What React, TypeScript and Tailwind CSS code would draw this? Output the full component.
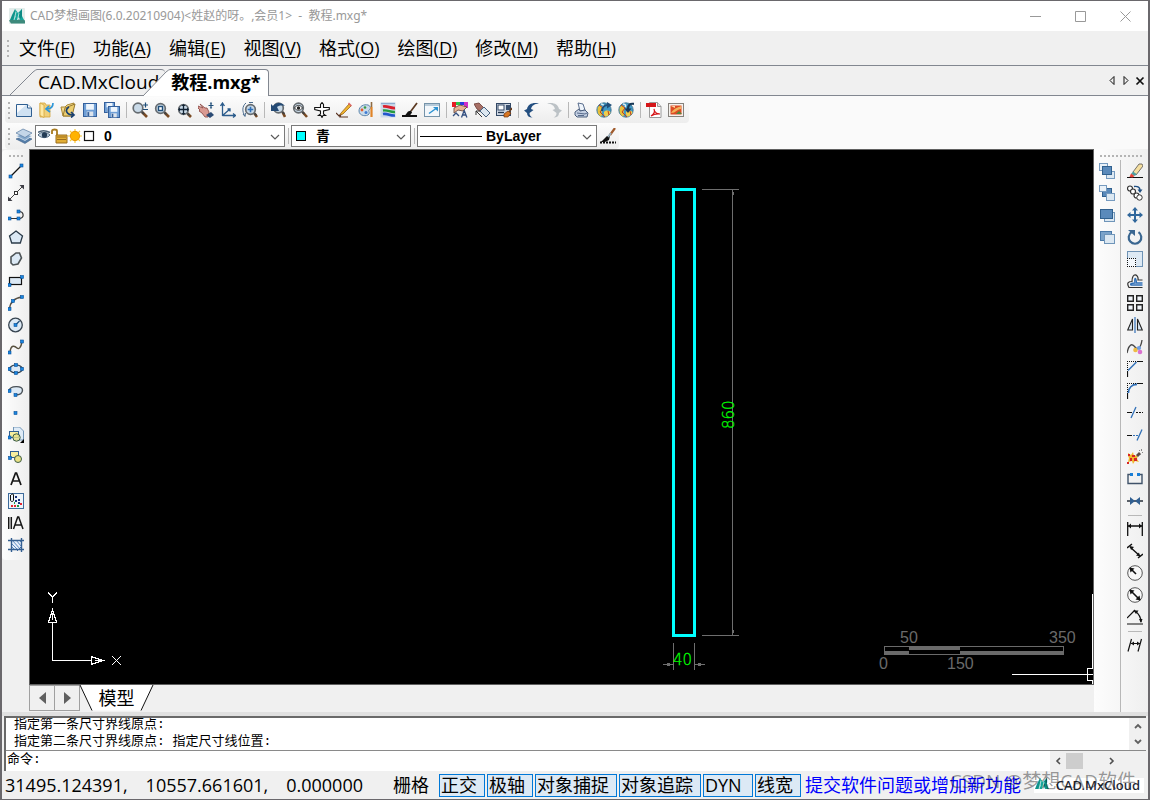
import React from "react";

const NAVY = "#1f4e79";
const BLUE = "#2f6fb7";

const Lens = ({ x = 6, y = 6 }: { x?: number; y?: number }) => (
  <>
    <path d={`M${x + 4} ${y + 4}L15 15`} stroke="#7a4a22" strokeWidth="2.6" />
    <path d={`M${x + 3.5} ${y + 3.5}l2.500 2.500`} stroke="#444" strokeWidth="1.8" />
    <circle cx={x} cy={y} r="4.8" fill="#c9dae8" stroke="#666c71" strokeWidth="1.7" />
  </>
);

const Dot = ({ x, y }: { x: number; y: number }) => (
  <rect x={x - 1.5} y={y - 1.5} width="3" height="3" fill="#1a86e0" stroke="#0b4f96" strokeWidth=".6" />
);

const Globe = () => (
  <>
    <circle cx="8" cy="8" r="7.2" fill="#3f97c4" stroke="#3a6d88" strokeWidth=".8" />
    <path d="M2 5c3-3 5 0 4 3s1 5-1 6.500C2 13 .8 9 2 5z" fill="#e8c13a" />
    <path d="M9 9c3-1 5 0 5.500 1.500C13 13 11 15 9 14.500c-1-2-2-4 0-5.500z" fill="#f0cf4b" />
    <path d="M3 3l4 3-3 4 5 5M12 9l1 4" stroke="#c4401c" fill="none" />
    <path d="M5 2c3 0 3 2 2 3" stroke="#d8f0f6" strokeWidth="1.500" fill="none" />
  </>
);

const Palette = () => (
  <path d="M1 9C1 4 6 2 10 3c3 1 3 4 1 5-1 1 1 2 0 4-2 3-10 2-10-3z" fill="#c9dbea" stroke="#5e87ad" />
);

const Floppy = ({ x, y, s }: { x: number; y: number; s: number }) => (
  <>
    <rect x={x} y={y} width={s} height={s} fill="#6f9fd6" stroke="#34609c" />
    <rect x={x + s * 0.2} y={y + 0.5} width={s * 0.6} height={s * 0.44} fill="#eef5fc" />
    <rect x={x + s * 0.25} y={y + s * 0.62} width={s * 0.5} height={s * 0.36} fill="#dde4ec" />
    <rect x={x + s * 0.3} y={y + s * 0.66} width={s * 0.14} height={s * 0.32} fill="#34609c" />
  </>
);

const PaperFill = "#dce9f5";

const icons: Record<string, React.ReactNode> = {
  新建: (
    <>
      <path d="M.5 2.500h11l4 3.500v8.500H.5z" fill="#cfe1f2" stroke="#2f5f92" />
      <path d="M1 3h9L1 11z" fill="#fff" opacity=".8" />
      <path d="M11.500 2.500v3.500h4" fill="#fff" stroke="#2f5f92" />
    </>
  ),
  打开: (
    <>
      <path d="M2 1h5l1 2h4v12H2z" fill="#f1d07a" stroke="#d6a63c" strokeWidth=".8" />
      <path d="M2 1l4 2v12.500l-4-2z" fill="#ffe9a4" stroke="#d6a63c" strokeWidth=".8" />
      <path d="M15 1c0 4-2 6-6 6M11 4L8 7l4 3" fill="none" stroke="#2f96d8" strokeWidth="1.700" />
    </>
  ),
  打开云图: (
    <>
      <path d="M1 5h4l2-2 7-2-1 4-3 9H3z" fill="#f3d98b" stroke="#a98631" />
      <path d="M5 6l10-4-3 12H3z" fill="#edcf70" stroke="#94762b" />
      <path d="M9 5c-5 3-2 8 4 8M11 10l3 3-3 2.500" fill="none" stroke="#173f70" strokeWidth="1.700" />
    </>
  ),
  保存: <Floppy x={1.5} y={1.5} s={13} />,
  另存为: (
    <>
      <Floppy x={0.5} y={0.5} s={10} />
      <Floppy x={4.5} y={4.5} s={11} />
    </>
  ),
  实时缩放: (
    <>
      <Lens />
      <path d="M11 3h5M13.500.5v5M11 7.500h5" stroke={NAVY} strokeWidth="1.200" />
    </>
  ),
  窗口缩放: (
    <>
      <Lens x={6.5} y={6.5} />
      <rect x="4.500" y="4.500" width="4" height="4" fill="#fff" stroke={NAVY} strokeWidth="1.400" />
    </>
  ),
  范围缩放: (
    <>
      <Lens x={7.500} y={7.500} />
      <path d="M3 7.500h9M7.500 3v9" stroke="#123" strokeWidth="1.300" />
      <path d="M2 7.500l2-2v4zM13 7.500l-2-2v4zM7.500 2l-2 2h4zM7.500 13l-2-2h4z" fill="#123" />
    </>
  ),
  平移: (
    <>
      <path d="M0 4l5 2-3-4 5 4 2 0 2 4-1 5H7L4 11 1 9l1-1-2-2z" fill="#d99a92" stroke="#8f4f4b" strokeWidth=".9" />
      <path d="M8 13l5-3 3 3-4 3z" fill="#2b4a74" />
      <path d="M10.500 3.500h5M13 1v5" stroke={NAVY} strokeWidth="1.200" />
      <path d="M13 0l-1.300 1.500h2.600zM13 7l-1.300-1.500h2.600z" fill={NAVY} />
    </>
  ),
  坐标系: (
    <path d="M2.500 14V2M2.500 13.500H15M2.500 13.500L10 7M.5 4l2-3 2 3M13 11.500l2.500 2-2.500 2M7.500 7H10v2.500" fill="none" stroke="#2c5c8c" strokeWidth="1.300" />
  ),
  动态缩放: (
    <>
      <Lens x={8.500} y={7.500} />
      <path d="M8.500 4.700v5.600M5.700 7.500h5.600" stroke={BLUE} strokeWidth="1.600" />
      <path d="M4 1C0 4 0 10 3 14M1 12l2 2.500.5-3.500M7 .5h4" fill="none" stroke="#4b6c8e" />
    </>
  ),
  上一视图: (
    <>
      <Lens x={8.5} y={6} />
      <path d="M1 9V2l2 2c3-4 9-4 12 0-4-1-7 0-8 1l2 4z" fill="#244a75" />
    </>
  ),
  显示全部: (
    <>
      <Lens x={6.5} y={6} />
      <path d="M2.500 6c2-3.500 6-3.500 8 0-2 3-6 3-8 0z" fill="#fff" stroke="#333" />
      <circle cx="6.500" cy="6" r="1.700" fill="#222" />
    </>
  ),
  飞行: (
    <path d="M8 .5L6.500 2.500v3H.7v2l5.800 1.500v3l-2 1.500h2.500L8 15.500l1-2h2.500l-2-1.500V9l5.800-1.500v-2H9.500v-3z" fill="#fff" stroke="#111" strokeWidth="1.100" />
  ),
  编辑: (
    <>
      <path d="M0 11l3 3 2-2-1 3h8" fill="none" stroke="#5a3320" strokeWidth="1.200" />
      <path d="M5 11l8-9 2 2-8 8-3 1z" fill="#efb52d" stroke="#9b641f" strokeWidth=".8" />
      <path d="M12.500 1l3 3" stroke="#d66" strokeWidth="1.500" />
    </>
  ),
  颜色: (
    <>
      <Palette />
      <circle cx="4" cy="8" r="1.400" fill="#e45c2b" />
      <circle cx="7" cy="5.500" r="1.300" fill="#3a9b45" />
      <circle cx="8" cy="10.500" r="1.500" fill="#3f7bd3" />
      <path d="M13.500 5v10" stroke="#e08428" strokeWidth="2.200" />
      <path d="M13.500 0v5" stroke="#8e6b44" strokeWidth="1.600" />
    </>
  ),
  图层颜色: (
    <>
      <rect x=".5" y=".5" width="15" height="15" fill="#cddbea" />
      <path d="M3 4.500c5-1 7 2 12 1.500" stroke="#d9202e" strokeWidth="2.800" fill="none" />
      <path d="M3 8.500c5-1 7 2 12 1.500" stroke="#239b40" strokeWidth="2.400" fill="none" />
      <path d="M3 12c5-1 7 2 12 1.500" stroke="#2256cc" strokeWidth="2.600" fill="none" />
      <path d="M1 1.500h14" stroke="#8eabcf" strokeWidth="1.300" fill="none" />
    </>
  ),
  线宽设置: (
    <>
      <path d="M0 14h15" stroke="#111" strokeWidth="2" />
      <path d="M3 13.500l3-4 3-1 1 2-2 3z" fill="#111" />
      <path d="M9 9l6-8" stroke="#5b3921" strokeWidth="1.700" />
    </>
  ),
  窗口: (
    <>
      <rect x=".5" y="1.500" width="15" height="13" fill="#f3f7fb" stroke="#7593a9" />
      <path d="M1 3h14" stroke="#b6cad9" strokeWidth="2" />
      <path d="M5 11.500l7-5" stroke="#2d92d1" strokeWidth="1.500" />
      <path d="M9 5h5v4.500z" fill="#2d92d1" />
    </>
  ),
  文字样式: (
    <>
      <path d="M0 0h4v5H0z" fill="#e71c24" />
      <path d="M4 0h4v3H4z" fill="#2cc24b" />
      <path d="M8 0h4v3H8z" fill="#283be0" />
      <path d="M12 0h4v6h-4z" fill="#d12ec7" />
      <path d="M2 6l6-3 7 2-4 4-5-1-4 3z" fill="#eab393" stroke="#6c4e42" strokeWidth=".9" />
      <path d="M1 14l3-3 3 3M9.500 15.500l2.700-7 2.700 7M10.500 13h3.500" fill="none" stroke="#334f80" strokeWidth="1.300" />
    </>
  ),
  特性匹配: (
    <>
      <path d="M0 2l5-1 5 5-3 4-4-3z" fill="#a87066" stroke="#6b3933" strokeWidth=".8" />
      <path d="M6 9l4-4 6 6-4 4z" fill="#dce7f0" stroke="#47627f" />
      <path d="M2 13V9h4M2 9l6 6" fill="none" stroke="#333" />
    </>
  ),
  特性: (
    <>
      <rect x=".5" y="1.500" width="14" height="12" fill="#cfd8e4" stroke="#344966" />
      <rect x="2" y="3" width="6" height="5" fill="#fff" stroke="#344966" />
      <path d="M10 3h4v5h-4z" fill="#39506f" />
      <path d="M2 10.500h6" stroke="#26384f" strokeWidth="1.300" />
      <path d="M8 12l4-3 3 2-3 4-4 0z" fill="#d87622" stroke="#6e3410" strokeWidth=".7" />
      <path d="M13 10l3-4" stroke="#6a3e1d" strokeWidth="1.500" />
    </>
  ),
  撤销: (
    <path d="M0 8.500L3 7C4 2 9 0 15 1.500c-5 .5-7 2-8 5.500l2.500 1L5.500 11c0 2 1 3.500 3 4.500C5 15.500 3 14 3 11z" fill="#244f80" />
  ),
  重做: (
    <path d="M16 8.500L13 7C12 2 7 0 1 1.500c5 .5 7 2 8 5.500l-2.500 1 4 3c0 2-1 3.500-3 4.500 3.500 0 5.500-1.500 5.500-4.500z" fill="#bcc2c6" />
  ),
  打印: (
    <>
      <path d="M4 1l5 1 2 6-5 1z" fill="#eef4fb" stroke="#4b6082" strokeWidth=".9" />
      <path d="M1 10l4-3 1 2 5-1 3 3-1 4H3l-2-2z" fill="#c3cfe2" stroke="#4b5e7d" />
      <path d="M3 11l8 1 2-1M4 13.500h6" fill="none" stroke="#56698a" />
    </>
  ),
  网络: (
    <>
      <Globe />
      <path d="M6 9c0-4 3-6 6-6" stroke={NAVY} strokeWidth="2.200" fill="none" />
      <path d="M11 0l5 3-5 3.500z" fill={NAVY} />
    </>
  ),
  发布: (
    <>
      <Globe />
      <path d="M16 2c-4-1-6 1-6 5" stroke="#173755" strokeWidth="2.200" fill="none" />
      <path d="M6.500 6.500h7L10 11z" fill="#173755" />
    </>
  ),
  "输出 PDF": (
    <>
      <path d="M3.500.5h8l3.500 4v11H3.500z" fill="#fff" stroke="#9a9a9a" />
      <path d="M11.500.5v4H15" fill="#e1e1e1" stroke="#9a9a9a" />
      <rect x="0" y="1" width="10" height="4" fill="#d51619" />
      <path d="M5 14c3-2 4-5 3-7 0 3 3 5 6 5-4-.5-6 0-9 2z" fill="none" stroke="#d51619" strokeWidth="1.200" />
    </>
  ),
  输出图片: (
    <>
      <rect x=".5" y="1.500" width="15" height="13" fill="#f4f1ec" stroke="#85817c" />
      <rect x="2.500" y="3.500" width="11" height="9" fill="#dd4b23" />
      <path d="M3 11c4-6 7-5 10-7v3c-4 0-5 4-10 4z" fill="#f2b25a" />
      <path d="M8 12l3-3 3 3z" fill="#4e883e" />
      <path d="M3 4h4v2z" fill="#f9d5a5" />
    </>
  ),
  图层: (
    <>
      <path d="M0 11l8-3 8 3-7 4.500z" fill="#547da8" stroke="#3d6086" strokeWidth=".6" />
      <path d="M0 8l8-3 8 3-7 4.500z" fill="#85a8cb" stroke="#e9f1f8" strokeWidth=".7" />
      <path d="M0 5l7-4 9 4-7 4.500z" fill="#c4d6e8" stroke="#56799f" strokeWidth=".7" />
    </>
  ),
  线宽画笔: (
    <>
      <path d="M0 14.500h16" stroke="#111" strokeWidth="1.800" strokeDasharray="2 1" />
      <path d="M1 14l6-6 3 0-1 4-4 2z" fill="#111" />
      <path d="M10 7l5-7" stroke="#a05a2b" strokeWidth="2.200" />
      <path d="M8 9l3-4" stroke="#97abb8" strokeWidth="2" />
    </>
  ),

  直线: (
    <>
      <path d="M3 13L13 3" stroke="#111" strokeWidth="1.300" />
      <Dot x={2.500} y={13.500} />
      <Dot x={13.500} y={2.500} />
    </>
  ),
  构造线: (
    <>
      <path d="M2 14L14 2" stroke="#454545" />
      <path d="M0 16v-4.500l4.500 4.500zM16 0v4.500L11.500 0z" fill="#3d3d45" />
      <rect x="6.500" y="6.500" width="3" height="3" fill="#fff" stroke="#333" />
    </>
  ),
  多段线: (
    <>
      <path d="M1 11.500h9M11 4.500c5 0 6 7 0 7" fill="none" stroke="#333" strokeWidth="1.200" />
      <Dot x={1.500} y={11.500} />
      <Dot x={10.5} y={11.500} />
      <Dot x={10.5} y={4.500} />
    </>
  ),
  正多边形: <path d="M8 2l6.500 5-2.200 7H3.700L1.500 7z" fill={PaperFill} stroke="#2b3b49" strokeWidth="1.300" />,
  多边形: <path d="M8 2h3.500l2 5-3.500 6-5 1L3 12V6z" fill={PaperFill} stroke="#4d5356" strokeWidth="1.600" />,
  矩形: (
    <>
      <rect x="1.500" y="4.500" width="12" height="7" fill={PaperFill} stroke="#111" strokeWidth="1.200" />
      <Dot x={1.500} y={12} />
      <Dot x={14} y={4} />
    </>
  ),
  圆弧: (
    <>
      <path d="M1.500 14C2 7 7 3 14 2" fill="none" stroke="#554f45" strokeWidth="1.300" />
      <Dot x={1.500} y={14} />
      <Dot x={5} y={6} />
      <Dot x={14} y={2} />
    </>
  ),
  圆: (
    <>
      <circle cx="7.500" cy="8" r="6.800" fill={PaperFill} stroke="#374450" strokeWidth="1.300" />
      <path d="M7.500 8l4-4" stroke={NAVY} strokeWidth="1.200" />
      <Dot x={7.500} y={8} />
    </>
  ),
  样条曲线: (
    <>
      <path d="M2 13c1-8 5-6 7-4s4-1 5-6" fill="none" stroke="#57503f" strokeWidth="1.400" />
      <Dot x={1.500} y={13.500} />
      <Dot x={14} y={2.500} />
    </>
  ),
  椭圆: (
    <>
      <ellipse cx="8" cy="8" rx="6.500" ry="4" fill={PaperFill} stroke="#2d3b48" strokeWidth="1.200" />
      <Dot x={1.500} y={8} />
      <Dot x={14} y={8} />
      <Dot x={8} y={4} />
      <Dot x={8} y={12} />
    </>
  ),
  椭圆弧: (
    <>
      <path d="M1.500 7C2 3 14 2 14.500 7c0 4-4 5-7 5" fill={PaperFill} stroke="#4a5157" strokeWidth="1.400" />
      <Dot x={1.500} y={8} />
      <Dot x={7.500} y={12} />
    </>
  ),
  点: <Dot x={7.500} y={8} />,
  插入块: (
    <>
      <path d="M5.500 0h6l4 4v9H5.500z" fill="#deebf7" stroke="#7296b7" />
      <rect x="1.500" y="4.500" width="9" height="6" fill="#f6ee9e" stroke="#315f91" />
      <circle cx="8.500" cy="10.500" r="3.700" fill="#e9e184" stroke="#3e5e48" fillOpacity=".8" />
      <Dot x={1.500} y={10.500} />
      <path d="M16 12v4h-4z" fill="#000" />
    </>
  ),
  创建块: (
    <>
      <rect x="2.500" y="2.500" width="8" height="6" fill="#f6ee9e" stroke="#315f91" />
      <circle cx="10" cy="10" r="3.500" fill="#e9e184" stroke="#3e5e48" />
      <Dot x={2} y={9} />
    </>
  ),
  单行文字: <path d="M3 14L7.500 2h1L13 14M4.500 10h7" fill="none" stroke="#161616" strokeWidth="1.700" />,
  图块库: (
    <>
      <rect x=".5" y=".5" width="15" height="15" fill="#edf4fb" stroke="#3d6b9c" />
      <path d="M2.500 2v5c0 2 3 2 3 0V2c0-1.500-2-1.500-2 0" fill="none" stroke="#111" />
      <path d="M7 3h2v2H7zM7 7h2v2H7zM10 6h2v2h-2zM10 9h2v2h-2z" fill="#18317c" />
      <path d="M12 10h2v2h-2zM3 12h2v2H3zM6 12h2v2H6z" fill="#e32731" />
      <path d="M9 12h2v2H9zM6 9h1v2H6z" fill="#239942" />
    </>
  ),
  多行文字: <path d="M.7 2v12M3.300 2v12M5.500 14l4.200-12h1L15 14M7 10h6.500" fill="none" stroke="#161616" strokeWidth="1.500" />,
  图案填充: (
    <>
      <path d="M4 3h9v10H4z" fill="#e6effa" />
      <path d="M4 3l9 10M4 7l6 6M8 3l5 6M4 10l3 3M11 3l2 2" stroke="#5d8ac2" />
      <path d="M3.500 1v14M13.500 1v14M0 3.500h16M0 12.500h16" stroke="#345f91" strokeWidth="1.400" />
      <path d="M9 14l5-5" stroke="#3c67a0" />
    </>
  ),

  前置: (
    <>
      <rect x=".5" y=".5" width="8" height="7" fill="#e9f1f8" stroke="#759abf" />
      <rect x="7.500" y="8.500" width="8" height="7" fill="#dce8f2" stroke="#759abf" />
      <rect x="3.500" y="3.500" width="9" height="8" fill="#5a8abb" stroke="#31618f" />
    </>
  ),
  后置: (
    <>
      <rect x="3.500" y="3.500" width="9" height="8" fill="#5a8abb" stroke="#31618f" />
      <rect x=".5" y=".5" width="7" height="6" fill="#e9f1f8" stroke="#759abf" />
      <rect x="7.500" y="8.500" width="8" height="7" fill="#dce8f2" stroke="#759abf" />
    </>
  ),
  置于对象之上: (
    <>
      <rect x="5.500" y="5.500" width="10" height="9" fill="#dce8f2" stroke="#6f95b9" />
      <rect x="1.500" y="2.500" width="12" height="9" fill="#5a8abb" stroke="#31618f" />
    </>
  ),
  置于对象之下: (
    <>
      <rect x="1.500" y="2.500" width="11" height="9" fill="#7ba3ca" stroke="#4a79a8" />
      <rect x="5.500" y="5.500" width="10" height="9" fill="#dce8f2" stroke="#6f95b9" />
    </>
  ),
  删除: (
    <>
      <path d="M0 14.500h16" stroke="#111" />
      <path d="M6 9l6-8 3 0 1 2-7 9z" fill="#f5dfa0" stroke="#55524b" strokeWidth=".8" />
      <path d="M6 8.500l3.500 2.500-1.500 2-4-2z" fill="#4d9f9f" />
      <path d="M4 10.500l3.500 2.500-2 1.500L2.500 14z" fill="#e84335" />
    </>
  ),
  复制: (
    <>
      <circle cx="3" cy="3.500" r="2.500" fill="#fff" stroke="#333" strokeWidth="1.200" />
      <circle cx="6" cy="6.500" r="2.500" fill="#fff" stroke="#333" strokeWidth="1.200" />
      <circle cx="9.500" cy="10.500" r="2.500" fill="#fff" stroke="#333" strokeWidth="1.200" />
      <circle cx="12.500" cy="12.500" r="2.700" fill="#fff" stroke="#333" />
      <path d="M7 1.500c4-.5 6 1 6 4" fill="none" stroke="#1d4d80" strokeWidth="1.400" />
      <path d="M10.500 4.500h5L13 8z" fill="#1d4d80" />
    </>
  ),
  移动: (
    <path d="M8 0l3 3.500H9V7h3.500V5L16 8l-3.500 3V9H9v3.500h2L8 16l-3-3.500h2V9H3.500v2L0 8l3.500-3v2H7V3.500H5z" fill="#2f669b" />
  ),
  旋转: (
    <>
      <path d="M4.500 3.200a6.300 6.300 0 1 0 7 0" fill="none" stroke="#3a6690" strokeWidth="2.200" />
      <path d="M1 1h7v6z" fill="#3a6690" />
    </>
  ),
  缩放: (
    <g shapeRendering="crispEdges">
      <path d="M.5 7V.5h15v15H9" fill="#dde9f4" stroke="#6f93b5" />
      <rect x="0" y="7" width="9" height="9" fill="#f4f8fc" />
      <path d="M0 7.500h9M.5 7v9M8.500 7v9M0 15.500h9" stroke="#111" strokeDasharray="1 1" />
    </g>
  ),
  偏移: (
    <>
      <path d="M15.500 14.500H2c-3-5 0-6 3-6 0-10 7-7 6-1.500h4.500" fill="none" stroke="#333" strokeWidth="1.200" />
      <path d="M15.500 12H4c-1-1 0-2 4-2-1-6 1-6 1.500 0h6" fill="none" stroke={BLUE} strokeWidth="1.300" />
    </>
  ),
  阵列: (
    <path d="M.7.7h5.600v5.600H.7zM9.700.7h5.600v5.600H9.700zM.7 9.700h5.600v5.600H.7zM9.700 9.700h5.600v5.600H9.700z" fill="#f1f5fa" stroke="#222" strokeWidth="1.400" />
  ),
  镜像: (
    <>
      <path d="M5.500 2v11H.7z" fill="#dbe7f2" stroke="#222" strokeWidth="1.100" />
      <path d="M10.500 2v11h4.800z" fill="#dbe7f2" stroke="#222" strokeWidth="1.100" />
      <path d="M8 0v16" stroke={BLUE} strokeWidth="1.200" />
    </>
  ),
  编辑样条: (
    <>
      <path d="M0 14C2 5 5 4 8 8s6 0 7-7" fill="none" stroke="#454545" strokeWidth="1.300" />
      <circle cx="8.500" cy="11" r="2.300" fill="#efba43" />
      <circle cx="12" cy="9" r="2.100" fill="#6c9de2" />
      <circle cx="13" cy="13" r="2.300" fill="#da72cf" />
    </>
  ),
  倒角: (
    <>
      <path d="M.5 16v-6M10 .5h6" fill="none" stroke="#111" strokeWidth="1.200" />
      <path d="M1 9.500L9.500 1" stroke={BLUE} strokeWidth="1.500" />
      <path d="M.5 9V.5H9" fill="none" stroke="#111" strokeDasharray="1 1" shapeRendering="crispEdges" />
    </>
  ),
  圆角: (
    <>
      <path d="M.5 16v-6M10 .5h6" fill="none" stroke="#111" strokeWidth="1.200" />
      <path d="M1.300 10C1.500 5 5 1.500 10 1.300" fill="none" stroke={BLUE} strokeWidth="1.900" />
      <path d="M.5 9V.5H9" fill="none" stroke="#111" strokeDasharray="1 1" shapeRendering="crispEdges" />
    </>
  ),
  修剪: (
    <>
      <path d="M0 7.500h5" stroke="#111" />
      <path d="M9 7.500h7" stroke="#111" strokeDasharray="2 1" />
      <path d="M4 13l5-11" stroke={BLUE} strokeWidth="1.300" />
    </>
  ),
  延伸: (
    <>
      <path d="M0 8.500h5" stroke="#111" />
      <path d="M6 8.500h5" stroke={BLUE} strokeDasharray="2 1" />
      <path d="M10 13.500l5-11" stroke={BLUE} strokeWidth="1.300" />
    </>
  ),
  分解: (
    <>
      <path d="M1 4l3 2 2-3 1 4 4-1-1 4 2 3-4-1-2 3-1-3-4 1 1-4-1-2z" fill="#f0b62d" />
      <path d="M1 5h2v2H1zM5 6h3v2H5zM3 9h2v3H3zM7 9h3v3H7zM0 13h2v2H0z" fill="#d72522" />
      <path d="M9 6l3-3 2 2-3 3z" fill="#5b4b48" />
      <path d="M12 1h1v1h-1zM14 0h1v2h-1zM15 3h1v1h-1zM13 5h1v1h-1z" fill="#888" />
    </>
  ),
  打断: (
    <>
      <path d="M4 3.500H1v9h14v-9h-3" fill="none" stroke="#40536a" strokeWidth="1.400" />
      <path d="M3 2h3v3H3zM10 2h3v3h-3z" fill="#1a7fd6" />
    </>
  ),
  合并: (
    <>
      <path d="M0 8h16" stroke="#17202b" strokeWidth="1.400" />
      <path d="M3 4l5 4-5 4zM13 4L8 8l5 4z" fill="#315f91" />
    </>
  ),
  线性标注: (
    <>
      <path d="M.7 1v14M15.300 1v14M1 5h14" stroke="#111" strokeWidth="1.300" fill="none" />
      <path d="M1 5l3-2.500v5zM15 5l-3-2.500v5z" fill="#111" />
    </>
  ),
  对齐标注: (
    <>
      <path d="M0 5l5-4M11 15l5-4M3 4l10 9" stroke="#111" strokeWidth="1.400" />
      <path d="M3 3l4 1-3 3zM13 13.500l-4-1 3-3z" fill="#111" />
    </>
  ),
  半径标注: (
    <>
      <circle cx="8" cy="8" r="7.300" fill="#f8f8f8" stroke="#555" />
      <path d="M3 3l6 6" stroke="#111" strokeWidth="1.600" />
      <path d="M2.500 2.500l5 1-4 4z" fill="#111" />
    </>
  ),
  直径标注: (
    <>
      <circle cx="8" cy="8" r="7.300" fill="#f8f8f8" stroke="#555" />
      <path d="M3 3l10 10" stroke="#111" strokeWidth="1.600" />
      <path d="M2.500 2.500l5 1-4 4zM13.500 13.500l-5-1 4-4z" fill="#111" />
    </>
  ),
  角度标注: (
    <>
      <path d="M0 15h16M0 9l8-8M8 2c4 3 6 6 6 11" fill="none" stroke="#111" strokeWidth="1.200" />
      <path d="M6.500 1.500h5L9 5zM14 14l-2-4h3.500z" fill="#111" />
    </>
  ),
  编辑标注: (
    <>
      <path d="M1 14.500L4.500 2M11 14.500L14.500 2M4 6.500h9" stroke="#111" strokeWidth="1.200" />
      <path d="M4 6.500l3-2v4zM13 6.500l-3-2v4z" fill="#111" />
    </>
  ),
};

const ToolButton = ({ name }: { name: string }) => (
  <button
    type="button"
    aria-label={name}
    title={name}
    className="flex h-[22px] w-[22px] shrink-0 items-center justify-center rounded-sm hover:bg-[#d8e6f2]"
  >
    <svg width="16" height="16" viewBox="0 0 16 16" fill="none" aria-hidden="true">
      {icons[name]}
    </svg>
  </button>
);

const HandleV = () => (
  <span className="flex w-2 shrink-0 flex-col items-center justify-center gap-[3px]">
    {[0, 1, 2, 3].map((i) => (
      <i key={i} className="h-0.5 w-0.5 bg-[#b4b4b4]" />
    ))}
  </span>
);

const HandleH = ({ count }: { count: number }) => (
  <span className="flex h-2.5 shrink-0 items-center justify-center gap-0.5 pt-0.5">
    {Array.from({ length: count }, (_, i) => (
      <i key={i} className="h-0.5 w-0.5 bg-[#b4b4b4]" />
    ))}
  </span>
);

const SepV = () => (
  <span className="flex h-5 w-1.5 shrink-0 items-center justify-center">
    <i className="h-4 w-px bg-[#b8b8b8]" />
  </span>
);

const SepH = () => (
  <span className="flex h-1.5 items-center justify-center">
    <i className="h-px w-3.5 bg-[#b8b8b8]" />
  </span>
);

const MxLogo = ({ size, plate }: { size: number; plate?: boolean }) => (
  <svg width={size} height={size} viewBox="0 0 16 16" aria-hidden="true" className="shrink-0">
    {plate && <rect width="16" height="16" rx="1" fill="#e3edeb" />}
    {plate && <path d="M0 12.500l2-1h12l2 1v3H2z" fill="#3d8a7c" />}
    <path d="M6 1l3 4 4-4v7l2 4h-4l-1-3-2 3H5l2-4z" fill="#14a69b" />
    <path d="M6 1L3 7l-2 5h4l2-5z" fill="#0f948b" />
    <path d="M13 1L9.500 6l1.500 5 2-2z" fill="#0c8a84" />
    <path d="M7 4L5 12M10 5L8.500 12" stroke="#d5f3ee" strokeWidth=".8" />
  </svg>
);

const Chevron = () => (
  <svg width="10" height="6" viewBox="0 0 10 6" className="pointer-events-none absolute right-1 top-2" aria-hidden="true">
    <path d="M1 1l4 4 4-4" fill="none" stroke="#5a5a5a" strokeWidth="1.200" />
  </svg>
);

const topTools = [
  ["新建", "打开", "打开云图", "保存", "另存为"],
  ["实时缩放", "窗口缩放", "范围缩放", "平移", "坐标系", "动态缩放"],
  ["上一视图", "显示全部", "飞行", "编辑", "颜色", "图层颜色", "线宽设置", "窗口"],
  ["文字样式", "特性匹配", "特性"],
  ["撤销", "重做"],
  ["打印", "网络", "发布"],
  ["输出 PDF", "输出图片"],
];

const drawTools = [
  "直线", "构造线", "多段线", "正多边形", "多边形", "矩形", "圆弧", "圆", "样条曲线",
  "椭圆", "椭圆弧", "点", "插入块", "创建块", "单行文字", "图块库", "多行文字", "图案填充",
];

const orderTools = ["前置", "后置", "置于对象之上", "置于对象之下"];

const modifyTools = [
  ["删除", "复制", "移动", "旋转", "缩放", "偏移", "阵列", "镜像", "编辑样条", "倒角", "圆角", "修剪", "延伸", "分解", "打断", "合并"],
  ["线性标注", "对齐标注", "半径标注", "直径标注", "角度标注"],
  ["编辑标注"],
];

const menus: [string, string][] = [
  ["文件", "F"], ["功能", "A"], ["编辑", "E"], ["视图", "V"],
  ["格式", "O"], ["绘图", "D"], ["修改", "M"], ["帮助", "H"],
];

const modes = ["正交", "极轴", "对象捕捉", "对象追踪", "DYN", "线宽"];

const UI = "font-['Open_Sans','Noto_Sans_CJK_SC',sans-serif]";

function TitleBar() {
  return (
    <header className="flex h-[30px] shrink-0 items-center bg-white pl-[7px]">
      <MxLogo size={16} plate />
      <h1 className="ml-[5px] flex-1 whitespace-pre font-['Noto_Sans','Noto_Sans_CJK_SC',sans-serif] text-xs text-[#999]">
        CAD梦想画图(6.0.20210904)&lt;姓赵的呀。,会员1&gt;  -  教程.mxg*
      </h1>
      {[
        ["最小化", "M0 5.500h11"],
        ["最大化", "M.5.5h10v10H.5z"],
        ["关闭", "M.5.5l10 10M10.500.5l-10 10"],
      ].map(([label, d]) => (
        <button key={label} type="button" aria-label={label} className="flex h-full w-[45px] items-center justify-center">
          <svg width="11" height="11" viewBox="0 0 11 11" aria-hidden="true">
            <path d={d} fill="none" stroke="#999" />
          </svg>
        </button>
      ))}
    </header>
  );
}

function MenuBar() {
  return (
    <nav className="flex h-[34px] shrink-0 bg-[#f0f0f0] pl-0.5">
      <HandleV />
      <div className="flex items-center gap-[18px] pl-[7px]">
        {menus.map(([label, key]) => (
          <button key={key} type="button" className="whitespace-nowrap text-lg leading-6">
            {label}(<u className="underline-offset-2">{key}</u>)
          </button>
        ))}
      </div>
    </nav>
  );
}

function DocumentTabs() {
  return (
    <div className="flex h-[31px] shrink-0 items-stretch border-t border-[#828790] bg-[#f0f0f0] text-lg">
      <i className="w-2 border-b border-[#828790]" />
      <div role="tablist" className="flex items-end">
        <button type="button" role="tab" aria-selected="false" className="flex h-[27px] border-b border-[#828790]">
          <svg width="27" height="26" viewBox="0 0 27 26" aria-hidden="true">
            <path d="M0 26L23 3q3-2.500 4-2.500" fill="none" stroke="#828790" />
          </svg>
          <span className="h-full rounded-tr border-t border-[#828790] pl-px pr-1.5 text-[19px] leading-6">CAD.MxCloud</span>
        </button>
        <button type="button" role="tab" aria-selected="true" className="z-10 -ml-[22px] flex h-[27px]">
          <svg width="27" height="27" viewBox="0 0 27 27" aria-hidden="true">
            <path d="M0 27L23 3q3-2.500 4-2.500V27z" fill="#fff" />
            <path d="M0 27L23 3q3-2.500 4-2.500" fill="none" stroke="#828790" />
          </svg>
          <span className="h-full rounded-tr border-t border-r border-[#828790] bg-white pl-px pr-2 font-bold leading-6">教程.mxg*</span>
        </button>
      </div>
      <div className="flex flex-1 items-center justify-end gap-1 border-b border-[#828790] pr-[3px]">
        {[
          ["上一个标签", "M7 1.500v8l-4-4z"],
          ["下一个标签", "M3 1.500v8l4-4z"],
        ].map(([label, d]) => (
          <button key={label} type="button" aria-label={label} className="w-2.5">
            <svg width="10" height="11" viewBox="0 0 10 11" aria-hidden="true">
              <path d={d} fill="none" stroke="#111" />
            </svg>
          </button>
        ))}
        <button type="button" aria-label="关闭标签" className="w-2.5">
          <svg width="10" height="10" viewBox="0 0 10 10" aria-hidden="true">
            <path d="M1.500 1.500l7 7M8.500 1.500l-7 7" stroke="#111" strokeWidth="1.700" />
          </svg>
        </button>
      </div>
    </div>
  );
}

function Toolbars() {
  return (
    <div className="flex shrink-0 flex-col items-start bg-[#fafafa] pl-[3px] pt-px">
      <div role="toolbar" aria-label="标准" className="flex h-[26px] items-center rounded bg-linear-to-b from-[#fcfcfc] to-[#ededed] pr-0.5">
        <HandleV />
        {topTools.map((group, i) => (
          <React.Fragment key={i}>
            {i > 0 && <SepV />}
            {group.map((n) => (
              <ToolButton key={n} name={n} />
            ))}
          </React.Fragment>
        ))}
      </div>
      <div role="toolbar" aria-label="图层特性" className="flex h-[26px] items-center rounded bg-linear-to-b from-[#fcfcfc] to-[#ededed] font-['Liberation_Sans','Noto_Sans_CJK_SC',sans-serif] text-sm font-bold">
        <HandleV />
        <ToolButton name="图层" />
        <div className="relative flex h-[22px] w-[250px] items-center border border-[#7a7a7a] bg-white pl-0.5">
          <svg width="62" height="16" viewBox="0 0 62 16" aria-hidden="true">
            <path d="M0 7c3-4 9-3 12 0-2 3-8 4-12 0z" fill="#bfd0df" stroke="#536b81" />
            <circle cx="6.500" cy="7" r="2.700" fill="#243c55" />
            <path d="M0 4.500c4-3 8-2 12 0" stroke="#4d6377" fill="none" strokeWidth="1.500" />
            <path d="M14 6V3c0-2 5-2 5 0v4" fill="none" stroke="#a87b20" strokeWidth="1.800" />
            <path d="M18 7h11v8H18z" fill="#e2ae36" stroke="#9b6e1e" />
            <path d="M19 9h9M19 11.500h9" stroke="#9b6e1e" />
            <path d="M37 1v14M30 8h14M32 3l10 10M42 3L32 13" stroke="#f7ce3a" strokeWidth="1.200" />
            <circle cx="37" cy="8" r="4.700" fill="#ffb300" stroke="#ec9500" />
            <rect x="46.500" y="3.500" width="9" height="9" fill="#fff" stroke="#111" strokeWidth="1.200" />
          </svg>
          <select aria-label="图层" className="h-full flex-1 appearance-none bg-transparent pl-1 outline-none">
            <option>0</option>
          </select>
          <Chevron />
        </div>
        <SepV />
        <div className="relative flex h-[22px] w-[120px] items-center border border-[#7a7a7a] bg-white pl-1">
          <i className="h-2.5 w-2.5 border border-black bg-[#00ffff]" />
          <select aria-label="颜色" className="h-full flex-1 appearance-none bg-transparent pl-2.5 outline-none">
            <option>青</option>
          </select>
          <Chevron />
        </div>
        <SepV />
        <div className="relative flex h-[22px] w-[180px] items-center border border-[#7a7a7a] bg-white pl-0.5">
          <i className="h-px w-[62px] bg-black" />
          <select aria-label="线型" className="h-full flex-1 appearance-none bg-transparent pl-1 outline-none">
            <option>ByLayer</option>
          </select>
          <Chevron />
        </div>
        <ToolButton name="线宽画笔" />
      </div>
    </div>
  );
}

function Drawing() {
  return (
    <div className="relative min-h-0 flex-1 overflow-hidden border border-[#606060] bg-black">
      <svg width="100%" height="100%" className="absolute inset-0" shapeRendering="crispEdges" aria-label="图纸">
        <rect x="643.500" y="39.500" width="21" height="446" fill="none" stroke="#00ffff" strokeWidth="3" />
        <path d="M672 39.500h37M672 485.500h37M702.500 40v446M643.500 493v27M664.500 493v27M633 514.500h10M665 514.500h10" stroke="#6e6e6e" />
        <path d="M637 512.500v4l6-2zM671 512.500v4l-6-2zM702 42h2v3h-2zM702 480h2v3h-2z" fill="#6e6e6e" />
        <g fill="#00ff00" stroke="#00ff00" strokeWidth=".3" className="font-['DejaVu_Sans',sans-serif] text-[15px] font-extralight">
          <text x="643" y="515">40</text>
          <text transform="translate(704 279) rotate(-90)">860</text>
        </g>
      </svg>
      <svg width="80" height="80" viewBox="0 0 80 80" className="absolute bottom-3 left-4" fill="none" stroke="#fff" shapeRendering="crispEdges" aria-label="坐标轴">
        <path d="M6.500 30v38.500H45M6.500 18l-4 12h8zM6.500 21v7M57 68.500l-12-4v8zM49 68.500h8M2 .5l4.500 4.500L11 .5M6.500 5v6M66 64l9 9M75 64l-9 9" />
      </svg>
      <div className="absolute bottom-3 right-[13px] w-[200px] text-[#6a6a6a]" aria-label="比例尺">
        <svg width="200" height="44" viewBox="0 0 200 44" fill="#6a6a6a" className="overflow-visible font-['Liberation_Sans',sans-serif] text-base" aria-hidden="true">
          <text x="20" y="15">50</text>
          <text x="169" y="15">350</text>
          <text x="-1" y="41">0</text>
          <text x="67" y="41">150</text>
          <g shapeRendering="crispEdges">
            <rect x="4.500" y="18.500" width="179" height="8" fill="#000" stroke="#6a6a6a" />
            <path d="M4 23h25v4H4zM29 18h51v4H29zM80 23h104v4H80z" />
          </g>
        </svg>
      </div>
      <svg width="82" height="90" viewBox="0 0 82 90" className="absolute bottom-0 right-0" fill="none" stroke="#fff" shapeRendering="crispEdges" aria-label="光标">
        <path d="M1 80.500h81M81.500 0v74M82 74.500h-6v12h6M81.500 86v4" />
      </svg>
    </div>
  );
}

function CommandPanel() {
  return (
    <section
      aria-label="命令行"
      className="mx-0.5 flex h-[55px] shrink-0 flex-col border-t-2 border-l-2 border-[#696969] bg-white font-['Liberation_Mono','Noto_Sans_CJK_SC',monospace] text-[13px] leading-[17px]"
    >
      <div className="flex h-[33px] shrink-0 border-b border-[#8a8a8a]">
        <div className="flex flex-1 flex-col justify-end overflow-hidden whitespace-pre pl-2">
          <p>指定第一条尺寸界线原点:</p>
          <p>指定第二条尺寸界线原点: 指定尺寸线位置:</p>
        </div>
        <div className="flex w-[17px] flex-col items-center justify-around bg-[#f0f0f0]">
          {[
            ["向上滚动", "M1 5l3-3 3 3"],
            ["向下滚动", "M1 1l3 3 3-3"],
          ].map(([label, d]) => (
            <button key={label} type="button" aria-label={label}>
              <svg width="8" height="6" viewBox="0 0 8 6" aria-hidden="true">
                <path d={d} fill="none" stroke="#606060" strokeWidth="1.800" />
              </svg>
            </button>
          ))}
        </div>
      </div>
      <div className="flex min-h-0 flex-1">
        <label htmlFor="command" className="pl-px">命令:</label>
        <input id="command" className="min-w-0 flex-1 bg-transparent pl-1 outline-none" />
        <div className="flex w-[70px] items-center bg-[#f0f0f0]">
          <button type="button" aria-label="向左滚动" className="flex w-4 justify-center">
            <svg width="6" height="8" viewBox="0 0 6 8" aria-hidden="true"><path d="M5 1L2 4l3 3" fill="none" stroke="#505050" strokeWidth="1.600" /></svg>
          </button>
          <i className="h-4 w-[17px] bg-[#cdcdcd]" />
          <i className="flex-1" />
          <button type="button" aria-label="向右滚动" className="flex w-4 justify-center">
            <svg width="6" height="8" viewBox="0 0 6 8" aria-hidden="true"><path d="M1 1l3 3-3 3" fill="none" stroke="#505050" strokeWidth="1.600" /></svg>
          </button>
        </div>
        <i className="w-[26px] bg-[#f0f0f0]" />
      </div>
    </section>
  );
}

function StatusBar() {
  return (
    <footer className="relative flex h-7 shrink-0 items-center whitespace-nowrap bg-[#f0f0f0] pl-[3px] text-lg leading-6">
      <div className="flex w-96 gap-[18px]">
        <span>31495.124391,</span>
        <span>10557.661601,</span>
        <span>0.000000</span>
      </div>
      <button type="button" aria-pressed="false" className="w-[50px] pl-1 text-left">栅格</button>
      <div className="flex gap-0.5">
        {modes.map((m) => (
          <button
            key={m}
            type="button"
            aria-pressed="true"
            className={`h-[23px] border border-[#0078d7] bg-[#dce9f5] pl-px leading-[21px] ${m === "DYN" ? "w-[50px] text-left" : "pr-[7px]"}`}
          >
            {m}
          </button>
        ))}
      </div>
      <a href="#feedback" className="ml-1 text-[#0000ff]">提交软件问题或增加新功能</a>
      <span className="ml-auto mr-1 flex h-[15px] items-center gap-1.5 bg-white pr-1 font-['Noto_Sans',sans-serif] text-[13px] font-medium text-[#1d2733]">
        <MxLogo size={16} />
        CAD.MxCloud
      </span>
      <span className="pointer-events-none absolute bottom-2 right-3 text-[19px] leading-5 text-black/40">CSDN @梦想CAD软件</span>
    </footer>
  );
}

export default function App() {
  return (
    <div className={`flex h-screen flex-col overflow-hidden border-x-2 border-y border-[#6a686c] bg-[#f0f0f0] text-black ${UI}`}>
      <TitleBar />
      <MenuBar />
      <DocumentTabs />
      <Toolbars />
      <main className="flex min-h-0 flex-1">
        <aside role="toolbar" aria-label="绘图" className="flex w-[27px] shrink-0 flex-col pr-px pt-px">
          <div className="flex flex-col items-center rounded bg-linear-to-r from-[#fdfdfd] to-[#efefef] pb-1 pl-0.5">
            <HandleH count={4} />
            {drawTools.map((n) => (
              <ToolButton key={n} name={n} />
            ))}
          </div>
        </aside>
        <div className="flex min-w-0 flex-1 flex-col">
          <Drawing />
          <div className="flex h-[27px] shrink-0 items-start">
            {[
              ["上一布局", "M8 0v12L1 6z"],
              ["下一布局", "M1 0v12l7-6z"],
            ].map(([label, d]) => (
              <button key={label} type="button" aria-label={label} className="-mr-px flex h-[26px] w-[26px] items-center justify-center border border-[#a0a0a0]">
                <svg width="9" height="12" viewBox="0 0 9 12" aria-hidden="true"><path d={d} fill="#606060" /></svg>
              </button>
            ))}
            <button type="button" className="relative flex h-[26px] w-[75px] items-center justify-center text-lg">
              <svg viewBox="0 0 75 26" className="absolute inset-0" aria-hidden="true">
                <path d="M1 0l12 25.500h49L74 0z" fill="#fff" />
                <path d="M1 0l12 25.500M62 25.500L74 0" stroke="#111" fill="none" />
              </svg>
              <span className="relative">模型</span>
            </button>
          </div>
        </div>
        <aside className="flex w-[54px] shrink-0 flex-col bg-linear-to-r from-[#fdfdfd] to-[#efefef] pt-px">
          <HandleH count={11} />
          <div className="flex min-h-0 flex-1">
            <div role="toolbar" aria-label="绘图顺序" className="flex w-[26px] flex-col items-center">
              {orderTools.map((n) => (
                <ToolButton key={n} name={n} />
              ))}
            </div>
            <div role="toolbar" aria-label="修改" className="flex flex-1 flex-col items-center border-l border-[#b8b8b8]">
              {modifyTools.map((group, i) => (
                <React.Fragment key={i}>
                  {i > 0 && <SepH />}
                  {group.map((n) => (
                    <ToolButton key={n} name={n} />
                  ))}
                </React.Fragment>
              ))}
            </div>
          </div>
        </aside>
      </main>
      <div className="h-1 shrink-0 bg-[#e0e0e0]" />
      <CommandPanel />
      <StatusBar />
    </div>
  );
}
